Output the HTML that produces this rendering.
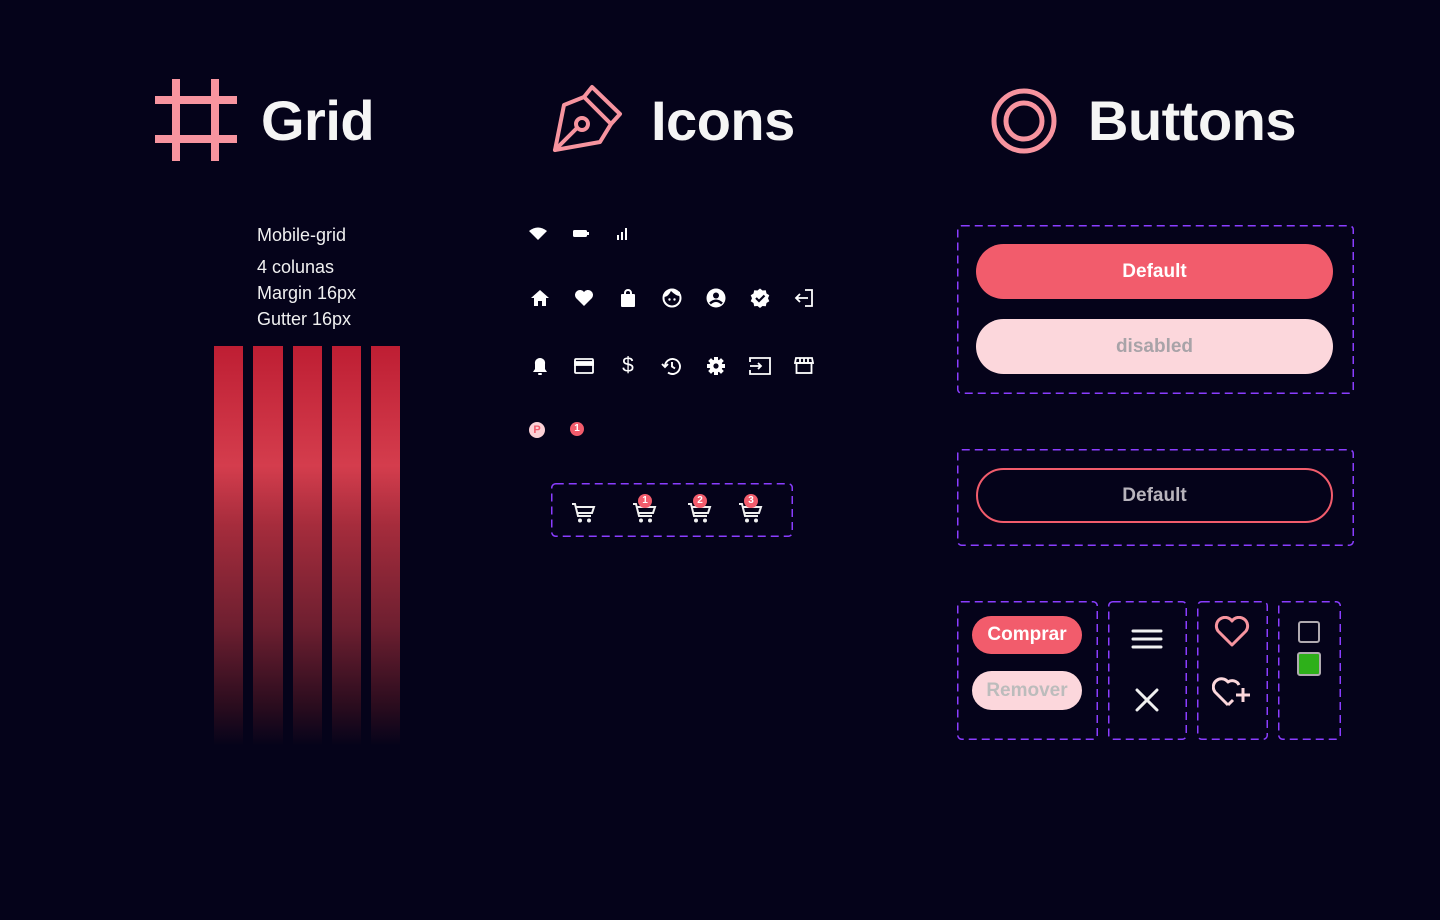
<!DOCTYPE html>
<html><head><meta charset="utf-8"><style>
body{margin:0;width:1440px;height:920px;background:#05031a;position:relative;overflow:hidden;font-family:"Liberation Sans",sans-serif;color:#f5f5f5}
.a{position:absolute}
h1{position:absolute;margin:0;font-size:56px;font-weight:bold;color:#f5f5f5;line-height:1;letter-spacing:-0.5px}
.bar{position:absolute;top:346px;height:400px;width:29px;background:linear-gradient(180deg,#be1e33 0%,#d43d4d 30%,#a52c3c 45%,#6e1f30 70%,#2a0c1e 90%,#05031a 100%)}
svg.dash{position:absolute;overflow:visible}
.btn{position:absolute;border-radius:28px;font-weight:bold;font-size:19px;display:flex;align-items:center;justify-content:center;box-sizing:border-box}
.t{position:absolute;font-size:18px;color:#f0f0f0}
svg.i{position:absolute;width:20px;height:20px}
</style></head><body>
<svg class="a" style="left:155px;top:79px" width="82" height="82" viewBox="0 0 82 82"><g fill="#f7949f"><rect x="17" y="0" width="8" height="82"/><rect x="56" y="0" width="8" height="82"/><rect x="0" y="17" width="82" height="8"/><rect x="0" y="56" width="82" height="8"/></g></svg>
<h1 style="left:261px;top:93px">Grid</h1>
<svg class="a" style="left:552px;top:84px" width="72" height="70" viewBox="0 0 72 70"><g fill="none" stroke="#f7949f" stroke-width="4" stroke-linejoin="round" stroke-linecap="round"><path d="M40 3 L68 30 L59 40 L32 13 Z"/><path d="M32 13 L12 21 L3 66 L48 58 L59 40"/><path d="M3 66 L25 44"/><circle cx="30" cy="40" r="6"/></g></svg>
<h1 style="left:651px;top:93px">Icons</h1>
<svg class="a" style="left:990px;top:87px" width="68" height="68" viewBox="0 0 68 68"><g fill="none" stroke="#f7949f" stroke-width="5"><circle cx="34" cy="34" r="30"/><circle cx="34" cy="34" r="18"/></g></svg>
<h1 style="left:1088px;top:93px">Buttons</h1>

<div class="t" style="left:257px;top:225px">Mobile-grid</div>
<div class="t" style="left:257px;top:257px">4 colunas</div>
<div class="t" style="left:257px;top:283px">Margin 16px</div>
<div class="t" style="left:257px;top:309px">Gutter 16px</div>
<div class="bar" style="left:214px"></div><div class="bar" style="left:253px;width:30px"></div><div class="bar" style="left:293px"></div><div class="bar" style="left:332px"></div><div class="bar" style="left:371px"></div>

<svg class="i" style="left:528px;top:224px" viewBox="0 0 20 20"><path d="M1 7 Q10 0 19 7 L10 16 Z" fill="#fff"/></svg>
<svg class="i" style="left:571px;top:224px" viewBox="0 0 20 20"><rect x="2" y="6" width="14" height="7" rx="1.5" fill="#fff"/><rect x="16" y="8" width="2" height="3" fill="#fff"/></svg>
<svg class="i" style="left:614px;top:224px" viewBox="0 0 20 20" fill="#fff"><rect x="3" y="11" width="2" height="5"/><rect x="7" y="8" width="2" height="8"/><rect x="11" y="4" width="2" height="12"/></svg>
<svg class="i" style="left:530px;top:288px" viewBox="0 0 20 20" fill="#fff"><path d="M10 2 L19 10 H16 V18 H12 V13 H8 V18 H4 V10 H1 Z"/></svg>
<svg class="i" style="left:574px;top:288px" viewBox="0 0 20 20" fill="#fff"><path d="M10 18 L2 10 A4.5 4.5 0 0 1 10 4 A4.5 4.5 0 0 1 18 10 Z"/></svg>
<svg class="i" style="left:618px;top:288px" viewBox="0 0 20 20"><rect x="3" y="6" width="14" height="13" rx="1" fill="#fff"/><path d="M7 8 V5 A3 3 0 0 1 13 5 V8" stroke="#fff" stroke-width="2" fill="none"/></svg>
<svg class="i" style="left:662px;top:288px" viewBox="0 0 20 20"><circle cx="10" cy="10" r="8.5" fill="none" stroke="#fff" stroke-width="2"/><path d="M2 9 Q6 9 9 3 Q14 8 18 8 L18 4 L10 1 L3 4 Z" fill="#fff"/><circle cx="7.5" cy="11.5" r="1.2" fill="#fff"/><circle cx="12.5" cy="11.5" r="1.2" fill="#fff"/></svg>
<svg class="i" style="left:706px;top:288px" viewBox="0 0 20 20"><circle cx="10" cy="10" r="9.5" fill="#fff"/><circle cx="10" cy="7.5" r="3" fill="#05031a"/><path d="M4 15.5 Q10 10 16 15.5" stroke="#05031a" stroke-width="2.5" fill="none"/></svg>
<svg class="i" style="left:750px;top:288px" viewBox="0 0 20 20"><path d="M10 0.5 L12.5 2.5 L15.8 2.3 L16.5 5.5 L19.3 7.3 L18 10.3 L19.3 13.3 L16.5 15 L15.8 18.2 L12.5 18 L10 20 L7.5 18 L4.2 18.2 L3.5 15 L0.7 13.3 L2 10.3 L0.7 7.3 L3.5 5.5 L4.2 2.3 L7.5 2.5 Z" fill="#fff"/><path d="M6 10 L9 13 L14.5 7.5" stroke="#05031a" stroke-width="2.2" fill="none"/></svg>
<svg class="i" style="left:794px;top:288px" viewBox="0 0 20 20" fill="none" stroke="#fff" stroke-width="1.8"><path d="M11 2 H18 V18 H11"/><path d="M14 10 H2 M6 6 L2 10 L6 14"/></svg>
<svg class="i" style="left:530px;top:356px" viewBox="0 0 20 20" fill="#fff"><path d="M10 2 A5 5 0 0 1 15 8 V13 L17 16 H3 L5 13 V8 A5 5 0 0 1 10 2 Z"/><rect x="8" y="17" width="4" height="2" rx="1"/></svg>
<svg class="i" style="left:574px;top:356px" viewBox="0 0 20 20" fill="none" stroke="#fff" stroke-width="1.8"><rect x="1" y="3" width="18" height="14" rx="1"/><rect x="1" y="6" width="18" height="3" fill="#fff"/></svg>
<div class="a" style="left:620px;top:354px;font-size:21px;color:#fff;width:16px;text-align:center">$</div>
<svg class="i" style="left:661px;top:356px" viewBox="0 0 20 20" fill="none" stroke="#fff" stroke-width="1.9"><path d="M4 10 A7.5 7.5 0 1 1 7 16.5"/><path d="M1 8 L4 11 L7 8"/><path d="M11 6 V10.5 L14 12.5"/></svg>
<svg class="i" style="left:706px;top:356px" viewBox="0 0 20 20"><circle cx="10" cy="10" r="6.5" fill="#fff"/><g stroke="#fff" stroke-width="4"><path d="M10 1 V19 M1 10 H19 M3.6 3.6 L16.4 16.4 M16.4 3.6 L3.6 16.4"/></g><circle cx="10" cy="10" r="2.6" fill="#05031a"/></svg>
<svg class="i" style="left:749px;top:356px;width:22px" viewBox="0 0 22 20" fill="none" stroke="#fff" stroke-width="1.8"><path d="M1 6 V2 H21 V18 H1 V14"/><path d="M1 10 H12 M9 7 L12 10 L9 13"/></svg>
<svg class="i" style="left:794px;top:356px" viewBox="0 0 20 20" fill="none" stroke="#fff" stroke-width="1.8"><path d="M2 2 H18 L19 7 H1 Z"/><path d="M6 2 V7 M10 2 V7 M14 2 V7"/><rect x="2.5" y="7" width="15" height="10"/></svg>
<div class="a" style="left:529px;top:422px;width:16px;height:16px;border-radius:50%;background:#fcd1d6;color:#f25c6c;font-size:11px;font-weight:bold;text-align:center;line-height:16px">P</div>
<div class="a" style="left:570px;top:422px;width:14px;height:14px;border-radius:50%;background:#f25c6c;color:#fff;font-size:10px;font-weight:bold;text-align:center;line-height:14px">1</div>

<svg class="dash" style="left:551px;top:483px" width="242" height="54"><rect x="0.75" y="0.75" width="240.5" height="52.5" rx="4" fill="none" stroke="#8a3dff" stroke-width="1.5" stroke-dasharray="8 5"/></svg>
<svg width="0" height="0" style="position:absolute"><defs><g id="cart" fill="none" stroke="#f0f0f0" stroke-width="2"><path d="M1 2 H4 L7 14 H20"/><path d="M5 5 H23 L21 11 H7"/><circle cx="9" cy="18.5" r="2" fill="#f0f0f0" stroke="none"/><circle cx="18" cy="18.5" r="2" fill="#f0f0f0" stroke="none"/></g></defs></svg>
<svg class="a" style="left:571px;top:502px" width="25" height="22" viewBox="0 0 25 22"><use href="#cart"/></svg>
<svg class="a" style="left:632px;top:502px" width="25" height="22" viewBox="0 0 25 22"><use href="#cart"/></svg>
<svg class="a" style="left:687px;top:502px" width="25" height="22" viewBox="0 0 25 22"><use href="#cart"/></svg>
<svg class="a" style="left:738px;top:502px" width="25" height="22" viewBox="0 0 25 22"><use href="#cart"/></svg>
<div class="a" style="left:638px;top:494px;width:14px;height:14px;border-radius:50%;background:#f25c6c;color:#fff;font-size:10px;font-weight:bold;text-align:center;line-height:14px">1</div>
<div class="a" style="left:693px;top:494px;width:14px;height:14px;border-radius:50%;background:#f25c6c;color:#fff;font-size:10px;font-weight:bold;text-align:center;line-height:14px">2</div>
<div class="a" style="left:744px;top:494px;width:14px;height:14px;border-radius:50%;background:#f25c6c;color:#fff;font-size:10px;font-weight:bold;text-align:center;line-height:14px">3</div>

<svg class="dash" style="left:957px;top:225px" width="397" height="169"><rect x="0.75" y="0.75" width="395.5" height="167.5" rx="4" fill="none" stroke="#8a3dff" stroke-width="1.5" stroke-dasharray="8 5"/></svg>
<div class="btn" style="left:976px;top:244px;width:357px;height:55px;background:#f25c6c;color:#fff">Default</div>
<div class="btn" style="left:976px;top:319px;width:357px;height:55px;background:#fcd7dc;color:#a8a3a8">disabled</div>
<svg class="dash" style="left:957px;top:449px" width="397" height="97"><rect x="0.75" y="0.75" width="395.5" height="95.5" rx="4" fill="none" stroke="#8a3dff" stroke-width="1.5" stroke-dasharray="8 5"/></svg>
<div class="btn" style="left:976px;top:468px;width:357px;height:55px;border:2px solid #f25c6c;color:#b8b4bc">Default</div>

<svg class="dash" style="left:957px;top:601px" width="141" height="139"><rect x="0.75" y="0.75" width="139.5" height="137.5" rx="4" fill="none" stroke="#8a3dff" stroke-width="1.5" stroke-dasharray="8 5"/></svg>
<div class="btn" style="left:972px;top:616px;width:110px;height:38px;background:#f25c6c;color:#fff;font-size:19px">Comprar</div>
<div class="btn" style="left:972px;top:671px;width:110px;height:39px;background:#fcd7dc;color:#bcbcbc;font-size:19px">Remover</div>
<svg class="dash" style="left:1108px;top:601px" width="79" height="139"><rect x="0.75" y="0.75" width="77.5" height="137.5" rx="4" fill="none" stroke="#8a3dff" stroke-width="1.5" stroke-dasharray="8 5"/></svg>
<svg class="a" style="left:1131px;top:628px" width="32" height="24" viewBox="0 0 32 24" stroke="#f0f0f0" stroke-width="3" stroke-linecap="round"><path d="M2 3 H30 M2 11 H30 M2 19 H30"/></svg>
<svg class="a" style="left:1135px;top:688px" width="24" height="24" viewBox="0 0 24 24" stroke="#f0f0f0" stroke-width="3" stroke-linecap="round"><path d="M2 2 L22 22 M22 2 L2 22"/></svg>
<svg class="dash" style="left:1197px;top:601px" width="71" height="139"><rect x="0.75" y="0.75" width="69.5" height="137.5" rx="4" fill="none" stroke="#8a3dff" stroke-width="1.5" stroke-dasharray="8 5"/></svg>
<svg class="a" style="left:1214px;top:616px" width="36" height="32" viewBox="0 0 36 32"><path d="M18 29 L4 15 A8 8 0 0 1 18 5 A8 8 0 0 1 32 15 Z" fill="none" stroke="#f7949f" stroke-width="3" stroke-linejoin="round"/></svg>
<svg class="a" style="left:1212px;top:676px" width="40" height="34" viewBox="0 0 40 34" fill="none" stroke="#fcd7dc" stroke-width="3" stroke-linejoin="round"><path d="M16 29 L3 16 A7.5 7.5 0 0 1 16 6 A7.5 7.5 0 0 1 27 9"/><path d="M16 29 L21 24"/><path d="M31 12 V26 M24 19 H38"/></svg>
<svg class="dash" style="left:1278px;top:601px" width="63" height="139"><rect x="0.75" y="0.75" width="61.5" height="137.5" rx="4" fill="none" stroke="#8a3dff" stroke-width="1.5" stroke-dasharray="8 5"/></svg>
<div class="a" style="left:1298px;top:621px;width:22px;height:22px;border:2px solid #b0aab0;border-radius:3px;box-sizing:border-box"></div>
<div class="a" style="left:1297px;top:652px;width:24px;height:24px;border:2px solid #b0aab0;border-radius:3px;background:#2eb01a;box-sizing:border-box"></div>
</body></html>
